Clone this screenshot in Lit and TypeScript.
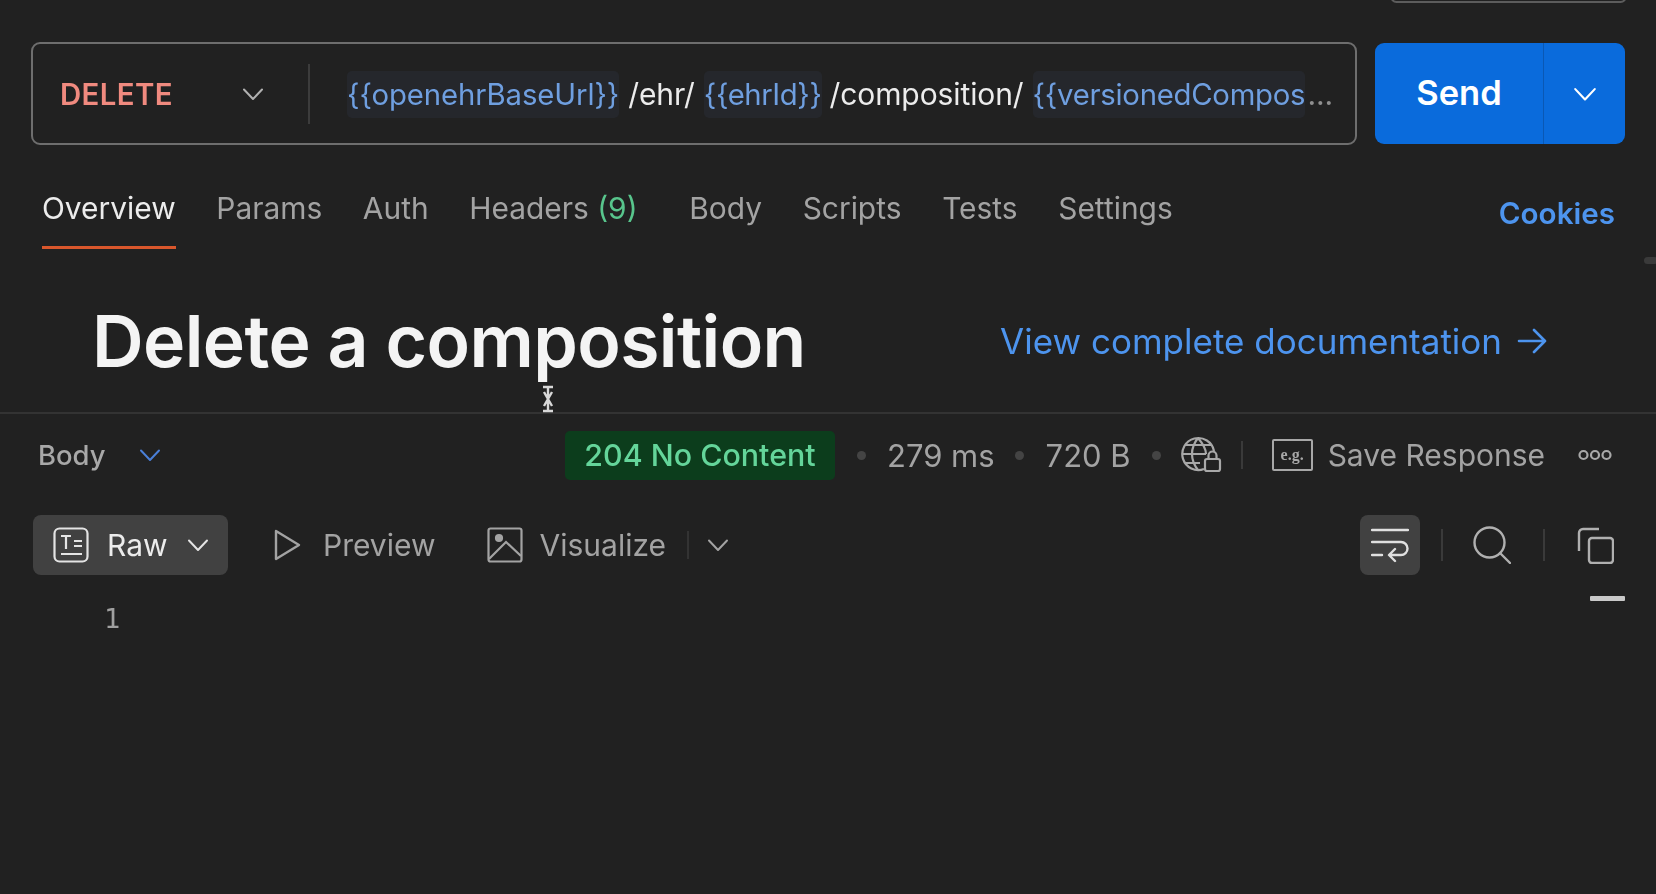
import { LitElement, html, css } from "lit";
import { customElement } from "lit/decorators.js";

const chev = (w: number, c: string, sw = 2) => html`<svg width=${w} height=${w} viewBox="0 0 24 24" fill="none" stroke=${c} stroke-width=${sw} stroke-linecap="round" stroke-linejoin="round"><path d="M3 7.5 L12 17 L21 7.5"/></svg>`;

@customElement("app-root")
export class AppRoot extends LitElement {
  static styles = css`
    :host { display: block; position: relative; width: 1656px; height: 894px; overflow: hidden; background: #212121; color: #e6e6e6; font-family: Inter, "Liberation Sans", sans-serif; }
    .soft { filter: blur(0.45px); height: 100%; }
    .req { display: flex; gap: 18px; padding: 42px 31px 0; height: 103px; }
    .url { flex: none; width: 1326px; box-sizing: border-box; height: 103px; border: 2px solid #6e6e6e; border-radius: 9px; display: flex; align-items: center; overflow: hidden; }
    .method { width: 277px; flex: none; display: flex; align-items: center; justify-content: space-between; padding: 1px 43px 0 27px; box-sizing: border-box; height: 60px; border-right: 2px solid #3c3c3c; font-size: 29.4px; font-weight: 600; color: #f08a7f; letter-spacing: 0.4px; }
    .path { display: flex; align-items: center; font-size: 30px; margin: 1px 0 0 37px; white-space: nowrap; color: #ececec; letter-spacing: -0.1px; }
    .var { color: #6f9fe0; background: #25272c; border-radius: 5px; padding: 6px 0; font-size: 29.3px; }
    .var.short { letter-spacing: -0.4px; }
    .sl { margin: 0 9px; }
    .sl.c { margin-left: 8px; }
    .trunc { width: 272px; overflow: hidden; display: inline-block; letter-spacing: -0.25px; }
    .dots { color: #8f8f8f; margin-left: 3px; }
    .send { width: 250px; height: 101px; margin-top: 1px; background: #0a6bdc; border-radius: 9px; display: flex; color: #fff; font-size: 34.5px; font-weight: 600; }
    .send b { width: 169px; font-weight: 600; display: flex; align-items: center; justify-content: center; border-right: 1px solid #0a58b4; padding-bottom: 2px; box-sizing: border-box; }
    .send i { flex: 1; display: flex; align-items: center; justify-content: center; }
    .tabs { display: flex; align-items: flex-start; height: 103px; padding: 41px 41px 0 42px; box-sizing: border-box; font-size: 29.9px; color: #a3a3a3; gap: 40.7px; }
    .tab { height: 63px; line-height: 44px; box-sizing: border-box; white-space: nowrap; }
    .tab.on { color: #ececec; border-bottom: 3px solid #d9572c; }
    .tab em { font-style: normal; color: #58c58c; }
    .tab.h { margin-right: 11px; }
    .cookies { margin-left: auto; color: #4d94ee; font-weight: 600; margin-top: 5px; line-height: 44px; font-size: 29.6px; }
    .head { display: flex; align-items: center; justify-content: space-between; height: 166px; padding: 21px 108px 0 92px; border-bottom: 2px solid #333; box-sizing: border-box; }
    h1 { margin: 0; font-size: 71.5px; font-weight: 600; color: #f4f4f4; letter-spacing: -0.6px; }
    .link { display: flex; align-items: center; gap: 14px; color: #4d94ee; font-size: 35px; padding-top: 1px; }
    .resp { display: flex; align-items: center; height: 82px; padding: 0 0 0 38px; font-size: 31px; color: #a3a3a3; }
    .resp .b { font-weight: 500; color: #a8a8a8; font-size: 27.4px; width: 100px; }
    .badge { margin-left: 403px; width: 270px; height: 49px; border-radius: 5px; background: #0c3d1c; color: #64d59a; display: flex; align-items: center; justify-content: center; font-weight: 500; font-size: 30.4px; }
    .dot { width: 9px; height: 9px; border-radius: 50%; background: #444; flex: none; }
    .sep { width: 2px; height: 28px; background: #3a3a3a; flex: none; }
    .eg { width: 41px; height: 32px; box-sizing: border-box; border: 2px solid #a8a8a8; border-radius: 2px; display: flex; align-items: center; justify-content: center; font: 700 16px "Liberation Serif", serif; color: #a8a8a8; flex: none; }
    .save { font-size: 30px; }
    .view { display: flex; align-items: center; height: 60px; margin-top: 19px; padding-left: 33px; font-size: 30px; color: #a3a3a3; }
    .pill { display: flex; align-items: center; height: 60px; border-radius: 8px; background: #414141; color: #ececec; box-sizing: border-box; }
    .raw { width: 195px; padding-left: 20px; gap: 18px; }
    .it { display: flex; align-items: center; }
    .sq { width: 60px; justify-content: center; margin-left: auto; }
    .ln { margin: 28px 0 0 104px; font-family: "DejaVu Sans Mono", monospace; font-size: 27px; color: #a0a0a0; }
    .over { position: absolute; }
    svg { flex: none; display: block; }
  `;

  render() {
    return html`<div class="soft">
      <div class="over" style="left:1390px;top:-10px;width:233px;height:9px;border:2px solid #5c5c5c;border-radius:8px"></div>
      <div class="req">
        <div class="url">
          <div class="method"><span>DELETE</span>${chev(24, "#b0b0b0")}</div>
          <div class="path">
            <span class="var">{{openehrBaseUrl}}</span><span class="sl">/ehr/</span><span class="var short">{{ehrId}}</span><span class="sl c">/composition/</span><span class="var trunc">{{versionedCompos</span><span class="dots">...</span>
          </div>
        </div>
        <div class="send"><b>Send</b><i>${chev(26, "#fff")}</i></div>
      </div>
      <div class="tabs">
        <div class="tab on">Overview</div><div class="tab">Params</div><div class="tab">Auth</div>
        <div class="tab h">Headers <em>(9)</em></div><div class="tab">Body</div><div class="tab">Scripts</div><div class="tab">Tests</div><div class="tab">Settings</div>
        <div class="cookies">Cookies</div>
      </div>
      <div class="head">
        <h1>Delete a composition</h1>
        <div class="link"><span>View complete documentation</span>
          <svg width="32" height="32" viewBox="0 0 32 32" fill="none" stroke="#4d94ee" stroke-width="2.6" stroke-linecap="round" stroke-linejoin="round"><path d="M3 16H29M18 5L29 16L18 27"/></svg>
        </div>
      </div>
      <div class="resp">
        <span class="b">Body</span>${chev(24, "#4a7fd8")}
        <div class="badge">204 No Content</div>
        <span class="dot" style="margin-left:22px"></span>
        <span style="margin-left:21px">279 ms</span>
        <span class="dot" style="margin-left:20px"></span>
        <span style="margin-left:22px">720 B</span>
        <span class="dot" style="margin-left:21px"></span>
        <svg style="margin-left:19px" width="42" height="38" viewBox="0 0 42 38" fill="none" stroke="#a8a8a8" stroke-width="2.2"><path d="M24 33A16 16 0 1 1 34 15M2 18H26M5 9H31M5 27H20M18 2C10 12 10 24 18 34M18 2C24 9 26 14 26 18"/><rect x="25" y="23" width="15" height="12" rx="2"/><path d="M28.5 23V19.5a4 4 0 0 1 8 0V23"/></svg>
        <span class="sep" style="margin-left:19px"></span>
        <span class="eg" style="margin-left:29px">e.g.</span>
        <span class="save" style="margin-left:15px">Save Response</span>
        <svg style="margin-left:33px" width="34" height="12" viewBox="0 0 34 12" fill="none" stroke="#a8a8a8" stroke-width="2.2"><circle cx="5.5" cy="6" r="4"/><circle cx="17" cy="6" r="4"/><circle cx="28.5" cy="6" r="4"/></svg>
      </div>
      <div class="view">
        <div class="pill raw">
          <svg width="36" height="36" viewBox="0 0 36 36" fill="none" stroke="#e4e4e4" stroke-width="2.2"><rect x="1.5" y="1.5" width="33" height="33" rx="5"/><path d="M8 9H18M13 9V22M21 14H29M21 19H29M8 27H29"/></svg>
          <span>Raw</span>${chev(24, "#e4e4e4")}
        </div>
        <div class="it" style="margin-left:45px;gap:22px">
          <svg width="28" height="32" viewBox="0 0 28 32" fill="none" stroke="#a3a3a3" stroke-width="2.4" stroke-linejoin="round"><path d="M3 2L26 16L3 30Z"/></svg>
          <span>Preview</span>
        </div>
        <div class="it" style="margin-left:51px;gap:17px">
          <svg width="36" height="36" viewBox="0 0 36 36" fill="none" stroke="#a3a3a3" stroke-width="2.2"><rect x="1.5" y="1.5" width="33" height="33" rx="2"/><circle cx="12" cy="11" r="3" fill="#a3a3a3"/><path d="M2 32L19 15L34 29"/></svg>
          <span>Visualize</span>
        </div>
        <span class="sep" style="margin-left:21px;background:#333"></span>
        <span style="margin-left:17px">${chev(24, "#a3a3a3")}</span>
        <div class="pill sq">
          <svg width="38" height="36" viewBox="0 0 38 36" fill="none" stroke="#e0e0e0" stroke-width="2.4" stroke-linecap="round" stroke-linejoin="round"><path d="M1 3H37M1 15H30a6 6 0 0 1 0 13H19M24 22L18 28L24 34M1 28H11"/></svg>
        </div>
        <span class="sep" style="margin-left:21px;height:32px"></span>
        <svg style="margin-left:30px" width="38" height="38" viewBox="0 0 38 38" fill="none" stroke="#b0b0b0" stroke-width="2.4" stroke-linecap="round"><circle cx="16.5" cy="16.5" r="15"/><path d="M27 27L37 37"/></svg>
        <span class="sep" style="margin-left:32px;height:32px"></span>
        <svg style="margin-left:32px;margin-right:42px" width="37" height="37" viewBox="0 0 37 37" fill="none" stroke="#b0b0b0" stroke-width="2.4" stroke-linejoin="round"><rect x="12" y="11" width="24" height="25" rx="3"/><path d="M22 2H6a4 4 0 0 0-4 4V24"/></svg>
      </div>
      <div class="ln">1</div>
      <div class="over" style="left:1590px;top:596px;width:35px;height:5px;background:#c9c9c9;border-radius:1px"></div>
      <div class="over" style="left:1644px;top:257px;width:14px;height:7px;background:#3a3a3a;border-radius:4px"></div>
      <svg class="over" style="left:541px;top:385px" width="14" height="28" viewBox="0 0 14 28" fill="none" stroke="#d8d8d8" stroke-width="2.4"><path d="M2 2H12M2 26H12M7 2V26M3 7L11 21M11 7L3 21"/></svg>
    </div>`;
  }
}
